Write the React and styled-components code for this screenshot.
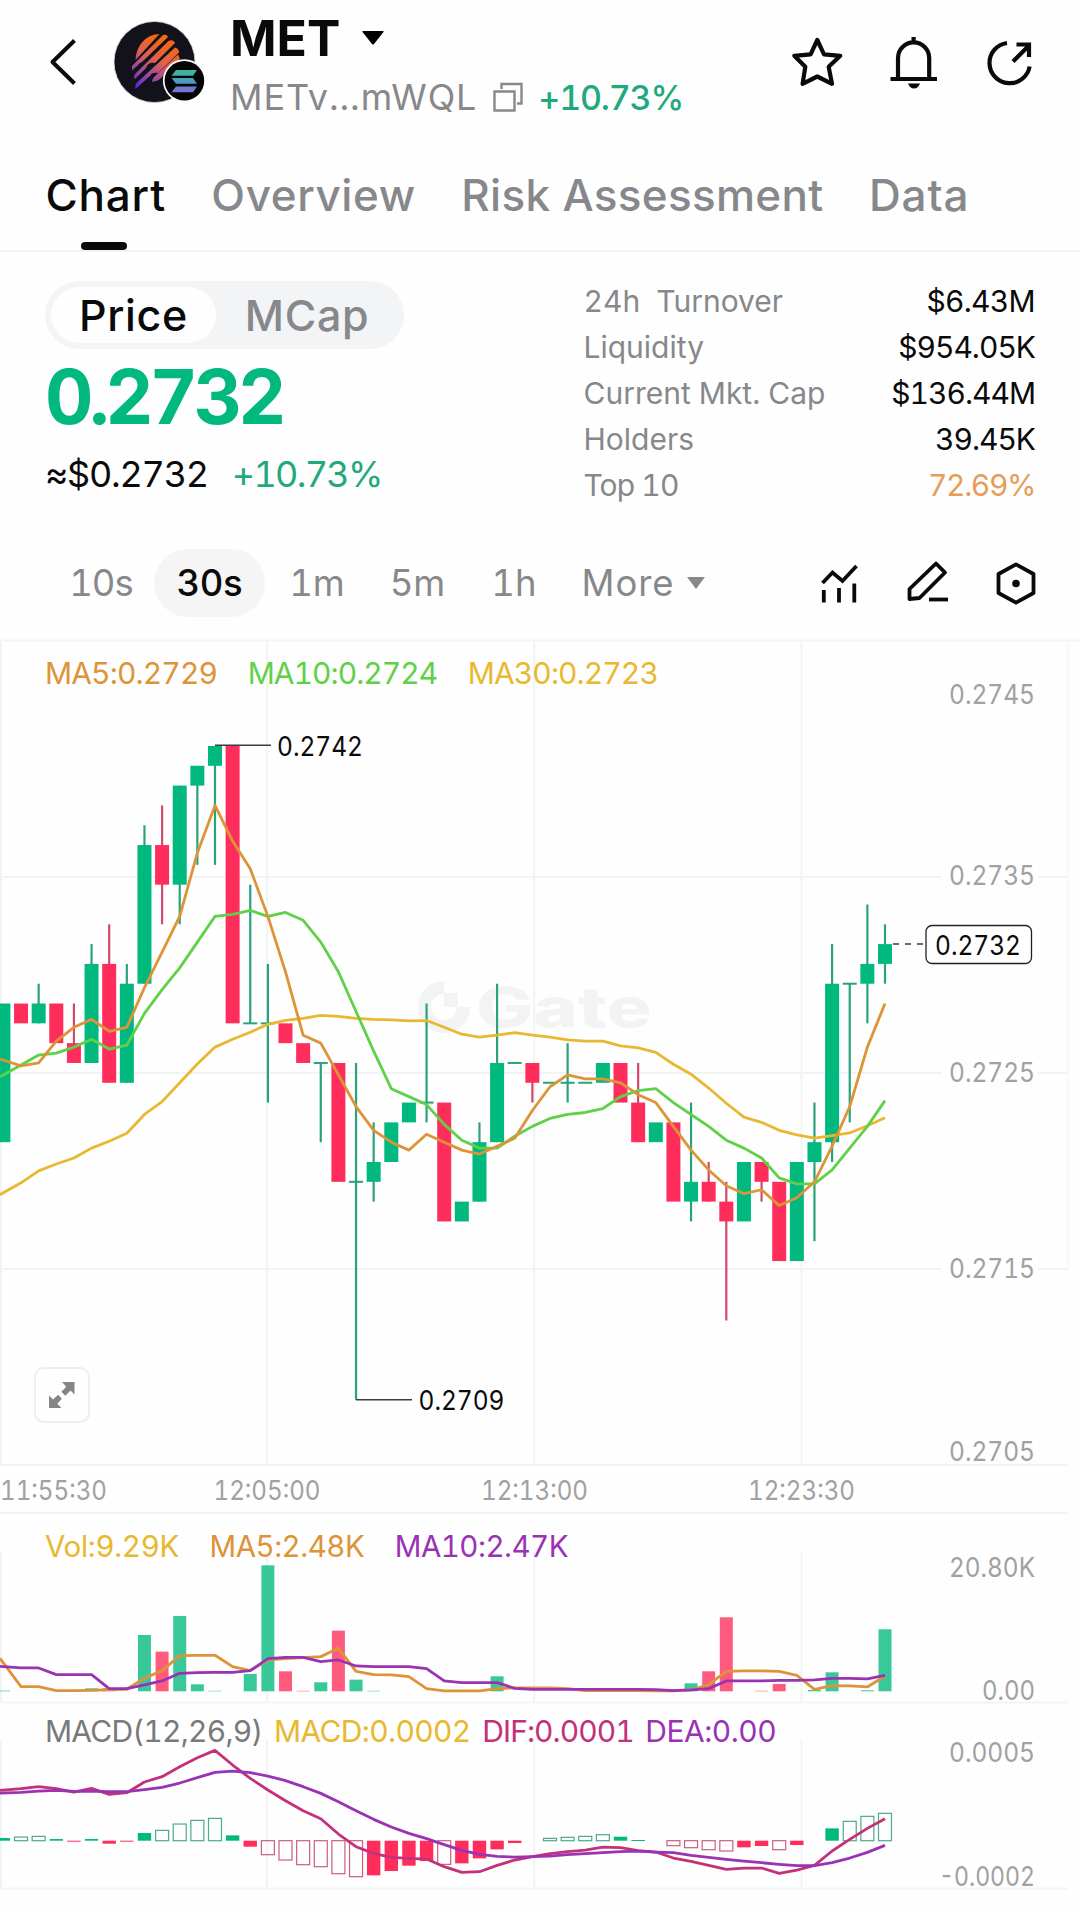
import React from "react";
import styled, { createGlobalStyle } from "styled-components";

const colors = {
    ink: "#0a0a0b",
    gray: "#86888b",
    axis: "#9fa1a3",
    grid: "#f2f3f5",
    up: "#01b87e",
    upWick: "#2aa37c",
    down: "#ff2d5b",
    downWick: "#d04a6c",
    orange: "#dd9438",
    lime: "#5fd148",
    yellow: "#e8b830",
    pink: "#c4307a",
    purple: "#9a32b4",
};

const font = `Inter, "Liberation Sans", sans-serif`;

const GlobalStyle = createGlobalStyle`
    * {
        box-sizing: border-box;
    }

    body {
        margin: 0;
        background: #fefefe;
        color: ${colors.ink};
        font-family: ${font};
        font-variant-numeric: tabular-nums;
    }

    svg {
        display: block;
        flex-shrink: 0;
        overflow: visible;
    }
`;

const Page = styled.main`
    width: 1080px;
    height: 1912px;
    overflow: hidden;
`;

const Label = styled.span`
    font-size: ${({ $size }) => $size}px;
    font-weight: ${({ $weight }) => $weight || 400};
    letter-spacing: ${({ $track }) => $track || 0}px;
    color: ${({ $color }) => $color || colors.ink};
    white-space: pre;
`;

/* header */

const Header = styled.header`
    display: flex;
    align-items: center;
    height: 124px;
    padding: 0 42px 0 46px;
`;

const Avatar = styled.div`
    margin-left: 32px;
`;

const TokenInfo = styled.div`
    display: flex;
    flex-direction: column;
    gap: 6px;
    margin-left: 20px;
    padding-top: 8px;
`;

const NameRow = styled.div`
    display: flex;
    align-items: center;
    gap: 21.5px;
    height: 56px;
`;

const AddressRow = styled.div`
    display: flex;
    align-items: center;
    gap: 15.5px;
    height: 50px;
`;

const Actions = styled.div`
    display: flex;
    gap: 40.5px;
    margin-left: auto;
`;

/* tabs */

const Tabs = styled.nav`
    display: flex;
    gap: 45.4px;
    height: 128px;
    padding: 46px 0 0 45.5px;
    border-bottom: 2px solid ${colors.grid};
`;

const Tab = styled.div`
    position: relative;
    font-size: 44px;
    font-weight: 500;
    line-height: 50px;
    letter-spacing: ${({ $track }) => $track || 0}px;
    color: ${({ $active }) => ($active ? colors.ink : colors.gray)};
    white-space: nowrap;

    &::after {
        content: "";
        display: ${({ $active }) => ($active ? "block" : "none")};
        position: absolute;
        left: 35.5px;
        bottom: 0;
        width: 46px;
        height: 8px;
        border-radius: 4px;
        background: ${colors.ink};
    }
`;

/* summary */

const Summary = styled.section`
    display: flex;
    justify-content: space-between;
    height: 296px;
    padding: 26px 45px 0;
`;

const Toggle = styled.div`
    display: flex;
    width: 359px;
    height: 68px;
    margin-top: 3px;
    padding: 6px;
    border-radius: 34px;
    background: #f2f4f5;
`;

const ToggleItem = styled.div`
    display: flex;
    align-items: center;
    justify-content: center;
    width: ${({ $width }) => $width}px;
    border-radius: 28px;
    font-size: 43px;
    font-weight: 500;
    letter-spacing: 0.7px;
    color: ${({ $active }) => ($active ? colors.ink : colors.gray)};
    background: ${({ $active }) => ($active ? "#fefefe" : "transparent")};
`;

const BigPrice = styled.div`
    margin-top: 11px;
    font-size: 75px;
    font-weight: 700;
    line-height: 74px;
    letter-spacing: -4.2px;
    color: ${colors.up};
`;

const SubPrice = styled.div`
    display: flex;
    gap: 24px;
    margin-top: 18px;
    line-height: 44px;
`;

const Stats = styled.div`
    width: 451.5px;
`;

const StatRow = styled.div`
    display: flex;
    justify-content: space-between;
    line-height: 46px;
`;

/* periods */

const Periods = styled.div`
    display: flex;
    align-items: center;
    height: 92px;
    padding: 0 40px 22px 48px;
`;

const Period = styled.div`
    display: flex;
    align-items: center;
    justify-content: center;
    gap: 13px;
    width: ${({ $width }) => $width}px;
    height: 68px;
    border-radius: 34px;
    font-size: 36.5px;
    font-weight: ${({ $active }) => ($active ? 500 : 400)};
    letter-spacing: ${({ $track }) => $track || 0}px;
    color: ${({ $active }) => ($active ? colors.ink : colors.gray)};
    background: ${({ $active }) => ($active ? "#f5f5f6" : "transparent")};
`;

const Tools = styled.div`
    display: flex;
    gap: 40px;
    margin-left: auto;
`;

/* chart panes */

const Pane = styled.section`
    position: relative;
    height: ${({ $height }) => $height}px;
`;

const Legend = styled.div`
    position: absolute;
    top: ${({ $top }) => $top}px;
    left: 45px;
    display: flex;
    gap: ${({ $gap }) => $gap}px;
    line-height: 40px;
`;

const ExpandButton = styled.button`
    position: absolute;
    left: 34px;
    top: 727px;
    display: flex;
    align-items: center;
    justify-content: center;
    width: 56px;
    height: 56px;
    padding: 0;
    border: 2px solid #eeeeef;
    border-radius: 10px;
    background: #fefefe;
`;

const stats = [
    { label: "24h  Turnover", value: "$6.43M", valueTrack: -0.7 },
    { label: "Liquidity", value: "$954.05K" },
    { label: "Current Mkt. Cap", value: "$136.44M" },
    { label: "Holders", value: "39.45K" },
    { label: "Top 10", value: "72.69%", color: "#e69c5a", labelTrack: -0.9, valueTrack: -1.4 },
];

// [direction, body top, body bottom, high, low], counted in 0.0001 ticks below 0.2742
const candles = [
    ["u", 13, 20], ["d", 13, 14], ["u", 13, 14, 12], ["d", 13, 15], ["d", 15, 16, 13],
    ["u", 11, 16, 10], ["d", 11, 17, 9], ["u", 12, 17, 11], ["u", 5, 12, 4], ["d", 5, 7, 3, 9],
    ["u", 2, 7, 2, 9], ["u", 1, 2, 1, 6], ["u", 0, 1, 0, 6], ["d", 0, 14], ["u", 14, 14, 7],
    ["u", 14, 14, 11, 18], ["d", 14, 15], ["d", 15, 16], ["u", 16, 16, 16, 20], ["d", 16, 22],
    ["u", 22, 22, 16, 33], ["u", 21, 22, 19, 23], ["u", 19, 21], ["u", 18, 19], ["u", 18, 18, 13, 19],
    ["d", 18, 24], ["u", 23, 24], ["u", 20, 23, 19], ["u", 16, 20, 12], ["u", 16, 16],
    ["d", 16, 17, 16, 18], ["u", 17, 17], ["u", 17, 17, 15, 18], ["u", 17, 17], ["u", 16, 17],
    ["d", 16, 18], ["d", 18, 20, 16], ["u", 19, 20], ["d", 19, 23], ["u", 22, 23, 18, 24],
    ["d", 22, 23, 21], ["d", 23, 24, 22, 29], ["u", 21, 24], ["d", 21, 22, 21, 23], ["d", 22, 26],
    ["u", 21, 26], ["u", 20, 21, 18, 25], ["u", 12, 20, 10, 21], ["u", 12, 12, 12, 19], ["u", 11, 12, 8, 14],
    ["u", 10, 11, 9, 12],
];

// averages that depend on candles left of the visible range
const ma5Head = [15.8, 16.15, 16, 14.9];
const ma10Head = [16.7, 16.1, 15.6, 15.5, 15.2, 14.8, 15.3, 15.1, 13.5];
const ma30Head = [
    22.65, 22.05, 21.45, 21.1, 20.8, 20.3, 19.95, 19.55, 18.6, 17.95, 17, 16.05, 15.2, 14.8, 14.45,
    14.05, 13.85, 13.75, 13.6, 13.65, 13.75, 13.8, 13.83, 13.88, 13.86, 14.2, 14.55, 14.7, 14.6,
];

const volumes = {
    0: 2, 5: 9, 6: 9, 8: 169, 9: 119, 10: 226, 11: 21, 12: 1.5, 14: 52, 15: 378, 16: 60, 17: 1.5, 18: 27,
    19: 182, 20: 35, 21: 1.5, 28: 45, 39: 24, 40: 60, 41: 222, 43: 1.5, 44: 22, 46: 4, 47: 57, 49: 3, 50: 186,
};
const volMa5 = [
    99, 14, 14, 2, 2, 3, 5, 6, 39, 62, 107, 108, 108, 74, 62, 94, 98, 101, 104, 129, 60, 50, 49, 44, 8, 1, 1,
    1, 8, 10, 10, 10, 8, 2, 2, 2, 2, 1, 1, 4, 20, 60, 61, 61, 60, 48, 6, 17, 16, 13, 46,
];
const volMa10 = [
    75, 70, 70, 50, 50, 50, 8, 8, 19, 31, 54, 56, 57, 57, 62, 98, 102, 102, 89, 94, 76, 74, 74, 74, 68, 31, 26,
    26, 26, 9, 6, 6, 6, 6, 6, 6, 6, 5, 2, 4, 8, 31, 31, 31, 33, 33, 34, 39, 39, 37, 48,
];

const macd = [
    8, 11, 13, 5, -3, 5, -9, -3, 23, 31, 50, 61, 67, 16, -18, -42, -58, -72, -78, -99, -108, -104, -91, -75,
    -61, -71, -68, -53, -26, -7, 0, 7, 10, 13, 18, 12, 2, 0, -15, -21, -27, -31, -20, -16, -27, -13, 0, 37,
    58, 73, 82,
];
const dif = [
    151, 156, 162, 156, 146, 157, 139, 144, 176, 192, 222, 249, 271, 227, 187, 152, 120, 90, 66, 20, -18, -38,
    -50, -53, -55, -78, -95, -93, -74, -58, -48, -39, -33, -28, -19, -21, -30, -34, -52, -62, -74, -86, -82,
    -82, -98, -88, -74, -31, 4, 37, 66,
];
const dea = [
    143, 145, 149, 151, 148, 149, 147, 147, 153, 160, 173, 189, 205, 209, 204, 194, 180, 162, 142, 117, 90, 64,
    41, 22, 6, -12, -29, -41, -47, -49, -48, -46, -42, -39, -36, -33, -31, -34, -36, -44, -50, -56, -61, -66,
    -71, -75, -75, -66, -52, -35, -14,
];

const xAt = (i) => 3.4 + i * 17.632;
const priceY = (tick) => 106 + tick * 19.81;
const volY = (v) => 179.3 - v / 3;
const macdY = (v) => 137.7 - v / 3;

const closes = candles.map(([dir, top, bottom]) => (dir === "u" ? top : bottom));

const movingAverage = (period, head) =>
    closes.map((_, i) =>
        i < head.length
            ? head[i]
            : closes.slice(i - period + 1, i + 1).reduce((sum, c) => sum + c, 0) / period
    );

const Line = ({ values, toY, color }) => (
    <polyline
        points={values.map((v, i) => `${xAt(i) - (i === 0 ? 3.4 : 0)},${toY(v)}`).join(" ")}
        fill="none"
        stroke={color}
        strokeWidth="2.8"
        strokeLinejoin="round"
    />
);

const AxisText = ({ x = 1035, y, width, size = 26.8, anchor = "end", color = colors.axis, children }) => (
    <text
        x={x}
        y={y + size * 0.355}
        fontSize={size}
        fontFamily={font}
        textAnchor={anchor}
        textLength={width}
        lengthAdjust="spacingAndGlyphs"
        fill={color}
    >
        {children}
    </text>
);

const Grid = ({ from, to, rows }) => (
    <g stroke={colors.grid} strokeWidth="2">
        {[1, 267, 534.3, 801.6].map((x) => (
            <line key={x} x1={x} x2={x} y1={from} y2={to} />
        ))}
        {rows.map((y) => (
            <line key={y} x1="0" x2="1068" y1={y} y2={y} />
        ))}
    </g>
);

const Candle = ({ index, data }) => {
    const [dir, top, bottom, high = top, low = bottom] = data;
    const x = xAt(index);
    const flat = top === bottom;
    const left = Math.max(x - 7, 0);
    const wick = dir === "u" ? colors.upWick : colors.downWick;
    return (
        <g>
            {(high < top || low > bottom) && (
                <line x1={x} x2={x} y1={priceY(high)} y2={priceY(low)} stroke={wick} strokeWidth="2.2" />
            )}
            <rect
                x={left}
                y={priceY(top) - (flat ? 1 : 0)}
                width={x + 7 - left}
                height={flat ? 2 : priceY(bottom) - priceY(top)}
                fill={flat ? wick : dir === "u" ? colors.up : colors.down}
            />
        </g>
    );
};

const Watermark = () => (
    <g fill="#f2f4f4">
        <path d="M444 341a26 26 0 1 0 26 26h-13a13 13 0 1 1-13-13z" />
        <path d="M444 353h14v14h-14z" />
        <text
            x="476"
            y="386.5"
            fontFamily={font}
            fontSize="55"
            fontWeight="800"
            textLength="176"
            lengthAdjust="spacingAndGlyphs"
        >
            Gate
        </text>
    </g>
);

const PricePane = () => (
    <Pane $height={872}>
        <svg width="1080" height="872" viewBox="0 0 1080 872">
            <Grid from={0} to={825} rows={[237, 433, 629, 825]} />
            <line x1="0" x2="1080" y1="0.5" y2="0.5" stroke={colors.grid} strokeWidth="2" />
            <line x1="1068.5" x2="1068.5" y1="0" y2="629" stroke="#f8f8f9" strokeWidth="2" />
            <Watermark />
            {candles.map((data, i) => (
                <Candle key={i} index={i} data={data} />
            ))}
            <Line values={movingAverage(30, ma30Head)} toY={priceY} color={colors.yellow} />
            <Line values={movingAverage(10, ma10Head)} toY={priceY} color={colors.lime} />
            <Line values={movingAverage(5, ma5Head)} toY={priceY} color={colors.orange} />

            <g stroke="#3c3c3e" strokeWidth="1.5">
                <line x1="215" x2="271" y1="105.3" y2="105.3" />
                <line x1="356" x2="412" y1="759.7" y2="759.7" />
                <line x1="893" x2="925" y1="304" y2="304" strokeDasharray="6 6" />
            </g>
            <AxisText x={277} y={106.5} width={86} anchor="start" color={colors.ink}>0.2742</AxisText>
            <AxisText x={418.5} y={760.5} width={86} anchor="start" color={colors.ink}>0.2709</AxisText>

            <g fill="#fefefe">
                <rect x="942" y="225" width="96" height="24" />
                <rect x="942" y="421" width="96" height="24" />
                <rect x="942" y="617" width="96" height="24" />
            </g>
            <AxisText y={54.5} width={86}>0.2745</AxisText>
            <AxisText y={235.7} width={86}>0.2735</AxisText>
            <AxisText y={432} width={86}>0.2725</AxisText>
            <AxisText y={628} width={86}>0.2715</AxisText>
            <AxisText y={811.5} width={86}>0.2705</AxisText>
            <rect x="926" y="285.5" width="105.5" height="38" rx="6" fill="#fefefe" stroke="#222224" strokeWidth="1.3" />
            <AxisText x={935} y={305.5} width={86} anchor="start" color={colors.ink}>0.2732</AxisText>

            <AxisText x={0} y={850.7} width={107} anchor="start">11:55:30</AxisText>
            <AxisText x={267} y={850.7} width={107} anchor="middle">12:05:00</AxisText>
            <AxisText x={534.5} y={850.7} width={107} anchor="middle">12:13:00</AxisText>
            <AxisText x={801.5} y={850.7} width={107} anchor="middle">12:23:30</AxisText>
        </svg>
        <Legend $top={13} $gap={30.5}>
            <Label $size={30} $track={-0.85} $color={colors.orange}>MA5:0.2729</Label>
            <Label $size={30} $track={-0.95} $color={colors.lime}>MA10:0.2724</Label>
            <Label $size={30} $track={-0.9} $color={colors.yellow}>MA30:0.2723</Label>
        </Legend>
        <ExpandButton>
            <svg width="28" height="28" viewBox="0 0 28 28" fill="#858585">
                <path d="M14 1h12.500v12.500l-4-4-5.200 5.200-4-4 5-5z" />
                <path d="M13.500 27H1V14.500l4 4 5.200-4.700 3.600 4-4.500 5z" />
            </svg>
        </ExpandButton>
    </Pane>
);

const VolumePane = () => (
    <Pane $height={191}>
        <svg width="1080" height="191" viewBox="0 0 1080 191">
            <Grid from={40} to={190} rows={[1, 190.5]} />
            {Object.entries(volumes).map(([i, v]) => (
                <rect
                    key={i}
                    x={xAt(Number(i)) - 6.5}
                    y={volY(v)}
                    width="13"
                    height={v / 3}
                    fill={candles[i][0] === "u" ? colors.up : colors.down}
                    opacity="0.78"
                />
            ))}
            <Line values={volMa5} toY={volY} color={colors.orange} />
            <Line values={volMa10} toY={volY} color={colors.purple} />
            <AxisText y={55.5} width={86}>20.80K</AxisText>
            <AxisText y={178.7} width={53}>0.00</AxisText>
        </svg>
        <Legend $top={14} $gap={30.5}>
            <Label $size={29.5} $track={-0.3} $color={colors.yellow}>Vol:9.29K</Label>
            <Label $size={29.5} $track={-0.5} $color={colors.orange}>MA5:2.48K</Label>
            <Label $size={29.5} $track={-0.5} $color={colors.purple}>MA10:2.47K</Label>
        </Legend>
    </Pane>
);

// a bar that grows away from zero is drawn hollow
const isHollow = (v, i) => {
    if (i === 0 || Math.abs(v) <= 6 || [6, 8, 14, 47].includes(i)) return false;
    return v > 0 ? v > macd[i - 1] : v < macd[i - 1];
};

const MacdPane = () => (
    <Pane $height={188}>
        <svg width="1080" height="188" viewBox="0 0 1080 188">
            <Grid from={37} to={185} rows={[185.5]} />
            {macd.map((v, i) => {
                if (v === 0) return null;
                const hollow = isHollow(v, i);
                const solid = v > 0 ? colors.up : colors.down;
                const outline = v > 0 ? "#4bab8c" : "#c8607c";
                return (
                    <rect
                        key={i}
                        x={xAt(i) - (hollow ? 6.5 : 6.7)}
                        y={Math.min(macdY(v), macdY(0))}
                        width={hollow ? 13 : 13.4}
                        height={Math.max(Math.abs(v) / 3, 1)}
                        fill={hollow ? "none" : solid}
                        stroke={hollow ? outline : "none"}
                        strokeWidth="1.2"
                    />
                );
            })}
            <Line values={dif} toY={macdY} color={colors.pink} />
            <Line values={dea} toY={macdY} color={colors.purple} />
            <AxisText y={49} width={86}>0.0005</AxisText>
            <AxisText y={173} width={96}>-0.0002</AxisText>
        </svg>
        <Legend $top={8} $gap={11.7}>
            <Label $size={30} $track={-0.75} $color="#77797b">MACD(12,26,9)</Label>
            <Label $size={30} $track={-0.65} $color={colors.yellow}>MACD:0.0002</Label>
            <Label $size={30} $track={-0.95} $color={colors.pink}>DIF:0.0001</Label>
            <Label $size={30} $track={-0.5} $color={colors.purple}>DEA:0.00</Label>
        </Legend>
    </Pane>
);

const TokenLogo = () => (
    <svg width="100" height="100" viewBox="0 0 100 100">
        <defs>
            <linearGradient id="met" gradientUnits="userSpaceOnUse" x1="56" y1="26" x2="28" y2="78">
                <stop offset="0" stopColor="#f7680c" />
                <stop offset="0.4" stopColor="#e0604e" />
                <stop offset="0.68" stopColor="#9a4c9c" />
                <stop offset="1" stopColor="#5322e6" />
            </linearGradient>
            <linearGradient id="sol" gradientUnits="userSpaceOnUse" x1="0" y1="58" x2="0" y2="81">
                <stop offset="0" stopColor="#3cb596" />
                <stop offset="0.5" stopColor="#4a9cc0" />
                <stop offset="1" stopColor="#8668d8" />
            </linearGradient>
        </defs>
        <circle cx="44.500" cy="50" r="40.500" fill="#131119" stroke="#d5d5d8" strokeWidth="0.8" />
        <g fill="url(#met)">
            <path d="M25.500 48C26 34 36 22 49.500 22z" />
            <path d="M22 58.500V54L53 23q4-1 5 2L32 50q-3 1-5 4z" />
            <path d="M25 67q-2-2 0-5L58.500 29q5-2 6.500 2L45 51q-7-1-9 5z" />
            <path d="M25.500 77q-1-3 1-6L65 35.500q4 1 4 5L48 61q-6-1-8 3z" />
            <path d="M42 70q0-3 2-5L68 42.500q2 3 1.500 6L50 67q-4 3-8 3z" />
        </g>
        <circle cx="74.400" cy="68.700" r="21.500" fill="#fefefe" />
        <circle cx="74.400" cy="68.700" r="19.800" fill="#050507" />
        <g fill="url(#sol)">
            <path d="M66 58h21l-4 5.800H61.500z" />
            <path d="M61.500 66H83l4 5.800H66z" />
            <path d="M66 74.500h21l-4 5.800H61.500z" />
        </g>
    </svg>
);

const App = () => {
    return (
        <>
            <GlobalStyle />
            <Page>
                <Header>
                    <svg width="32" height="52" viewBox="0 0 32 52" fill="none" stroke={colors.ink} strokeWidth="4">
                        <path d="M28.500 4.500 6.500 26l22 21.500" strokeLinejoin="round" />
                    </svg>
                    <Avatar>
                        <TokenLogo />
                    </Avatar>
                    <TokenInfo>
                        <NameRow>
                            <Label $size={50} $weight={700}>MET</Label>
                            <svg width="22" height="14" viewBox="0 0 22 14">
                                <path d="M1 0h20q1 0 .5 1L12 13q-1 1-2 0L.5 1Q0 0 1 0z" />
                            </svg>
                        </NameRow>
                        <AddressRow>
                            <Label $size={36} $track={0.9} $color={colors.gray}>METv...mWQL</Label>
                            <svg width="30" height="30" viewBox="0 0 30 30" fill="none" stroke={colors.gray} strokeWidth="2.400">
                                <path d="M1.500 9.500h20v19h-20zM8.500 7V2h20v19.500h-4.500" />
                            </svg>
                            <Label $size={34} $weight={500} $track={-1.2} $color="#1fa97c">+10.73%</Label>
                        </AddressRow>
                    </TokenInfo>
                    <Actions>
                        <svg width="56" height="56" viewBox="0 0 56 56" fill="none" stroke={colors.ink} strokeWidth="4.200" strokeLinejoin="round">
                            <path d="m28.300 6 6.700 14.300 16.300 1.500-11.600 11 3.300 17-14.700-7.300-14.700 7.300 2.700-17L5.300 21.800l16.300-1.500z" />
                        </svg>
                        <svg width="56" height="56" viewBox="0 0 56 56" fill="none" stroke={colors.ink} strokeWidth="4.200">
                            <path d="M12 45V24a15.600 15.600 0 0 1 31.200 0v21M27.600 9V3M4.500 45H51" />
                            <path d="M22 49.500h12q-2 5-6 5t-6-5z" fill={colors.ink} stroke="none" />
                        </svg>
                        <svg width="56" height="56" viewBox="0 0 56 56" fill="none" stroke={colors.ink} strokeWidth="4.200">
                            <path d="M25 9A20.200 20.200 0 1 0 47.600 32.500M31 27.500 47 11.500M34.500 10.500H47V23" />
                        </svg>
                    </Actions>
                </Header>

                <Tabs>
                    <Tab $active $track={0.8}>Chart</Tab>
                    <Tab $track={0.6}>Overview</Tab>
                    <Tab $track={0.3}>Risk Assessment</Tab>
                    <Tab $track={0.9}>Data</Tab>
                </Tabs>

                <Summary>
                    <div>
                        <Toggle>
                            <ToggleItem $active $width={165}>Price</ToggleItem>
                            <ToggleItem $width={182}>MCap</ToggleItem>
                        </Toggle>
                        <BigPrice>0.2732</BigPrice>
                        <SubPrice>
                            <Label $size={36} $track={-1.25}>≈$0.2732</Label>
                            <Label $size={36} $track={-1.7} $color="#1fa97c">+10.73%</Label>
                        </SubPrice>
                    </div>
                    <Stats>
                        {stats.map(({ label, value, color, labelTrack, valueTrack = -1 }) => (
                            <StatRow key={label}>
                                <Label $size={30} $track={labelTrack} $color={colors.gray}>{label}</Label>
                                <Label $size={30} $track={valueTrack} $color={color}>{value}</Label>
                            </StatRow>
                        ))}
                    </Stats>
                </Summary>

                <Periods>
                    <Period $width={106} $track={-1}>10s</Period>
                    <Period $width={111} $track={-0.4} $active>30s</Period>
                    <Period $width={104}>1m</Period>
                    <Period $width={97}>5m</Period>
                    <Period $width={96}>1h</Period>
                    <Period $width={163} $track={0.9}>
                        More
                        <svg width="18" height="12" viewBox="0 0 18 12" fill={colors.gray}>
                            <path d="M0 0h18L9 12z" />
                        </svg>
                    </Period>
                    <Tools>
                        <svg width="48" height="48" viewBox="0 0 48 48" fill="none" stroke={colors.ink} strokeWidth="3.800">
                            <path d="M6.500 24 16.500 13.500 26.500 22 40.500 7M7.800 31v12.500M23 29v14.500M38.300 24.500v19" />
                        </svg>
                        <svg width="48" height="48" viewBox="0 0 48 48" fill="none" stroke={colors.ink} strokeWidth="3.800">
                            <path d="M5.500 40V30L32 4.500 41 13.500 15.500 39z" strokeLinejoin="round" />
                            <path d="M25 40.500h19" />
                        </svg>
                        <svg width="48" height="48" viewBox="0 0 48 48" fill="none" stroke={colors.ink} strokeWidth="3.800">
                            <path d="m24 5.300 17.500 9.700v19L24 43.700 6.500 34V15z" strokeLinejoin="round" />
                            <circle cx="24" cy="24.500" r="3.800" fill={colors.ink} stroke="none" />
                        </svg>
                    </Tools>
                </Periods>

                <PricePane />
                <VolumePane />
                <MacdPane />
            </Page>
        </>
    );
};

export default App;
